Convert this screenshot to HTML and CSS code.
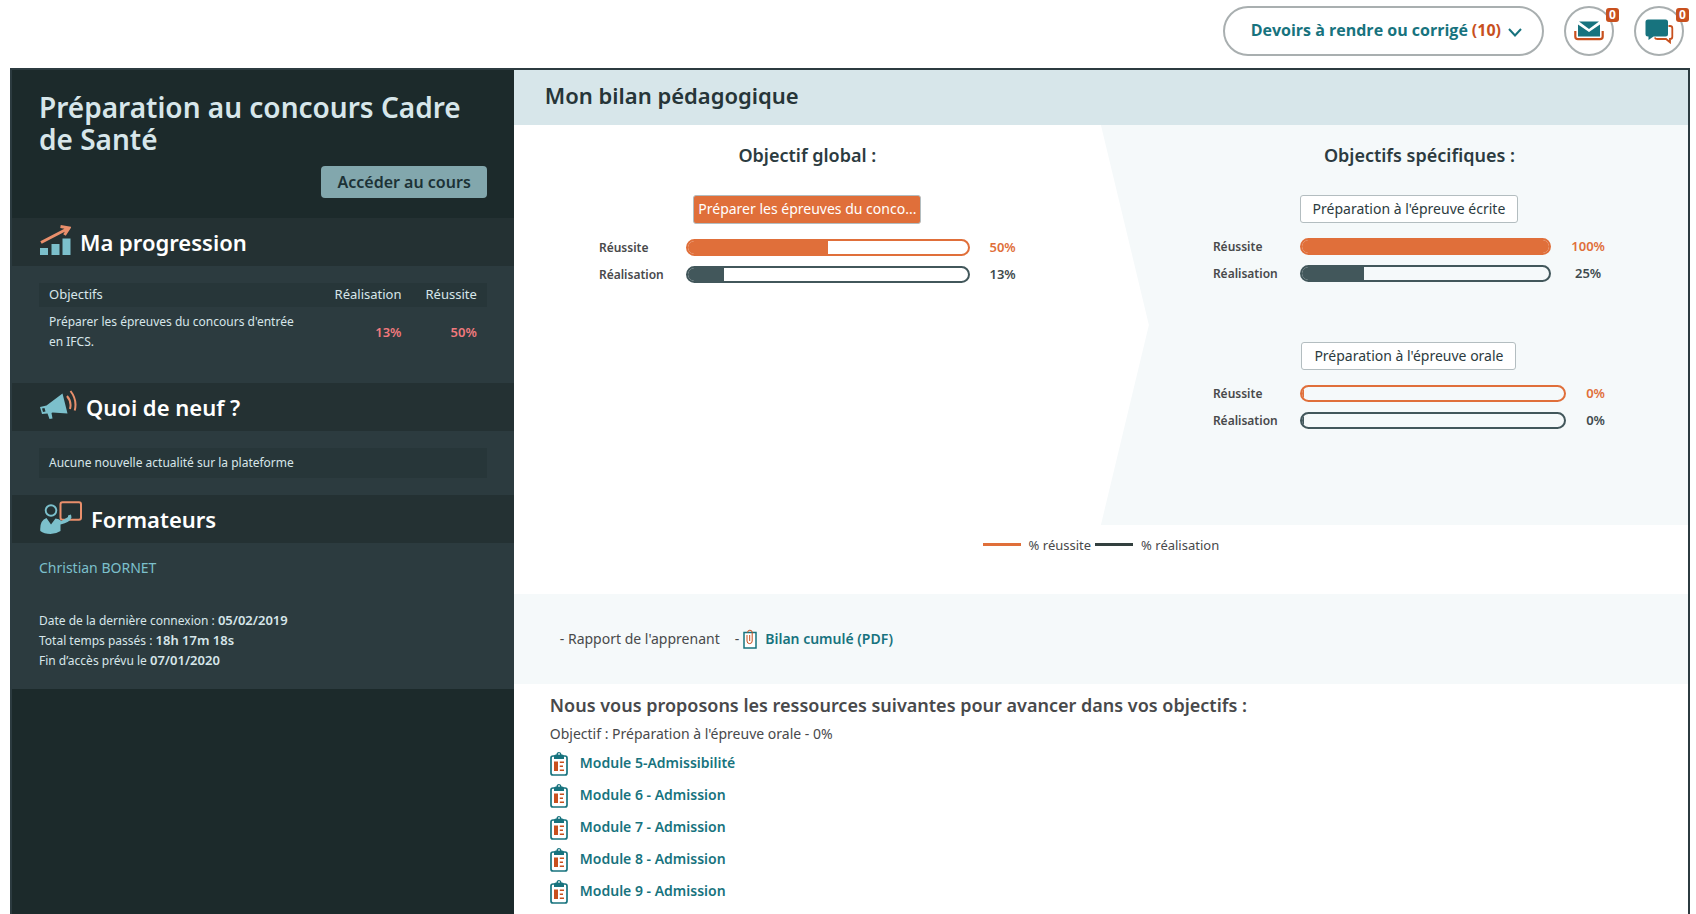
FILE: index.html
```html
<!DOCTYPE html>
<html lang="fr">
<head>
<meta charset="utf-8">
<meta name="viewport" content="width=device-width, initial-scale=1">
<title>Mon bilan pédagogique</title>
<link rel="stylesheet" href="styles.css">
</head>
<body>
<svg class="symbols" aria-hidden="true">
  <symbol id="clipboard" viewBox="0 0 18 25">
    <rect x="1" y="5" width="16" height="19" rx="2" fill="#fff" stroke="#17737e" stroke-width="1.7"/>
    <path d="M4 8V5.500a2 2 0 0 1 2-2h.5a2.500 2.500 0 0 1 5 0h.5a2 2 0 0 1 2 2V8z" fill="#17737e"/>
    <circle cx="9" cy="3" r="1" fill="#cfe3e6"/>
    <path d="M4 10.500h4v9.500H4zM9.800 10.500h4.200v1.500h-4.200zM9.800 14.500h3.200v1.500h-3.200zM9.800 18.500h4.200v1.500h-4.200z" fill="#c8501e"/>
  </symbol>
</svg>

<header class="topbar">
  <button type="button" class="pill">Devoirs à rendre ou corrigé <span class="pill-count">(10)</span>
    <svg class="chevron" viewBox="0 0 14 9" aria-hidden="true"><path d="M1 1l6 6.500L13 1" fill="none" stroke="#17737e" stroke-width="2"/></svg>
  </button>
  <button type="button" class="round" aria-label="Messagerie">
    <svg width="30" height="20" viewBox="0 0 30 20" aria-hidden="true">
      <path d="M1.300 10v5.500q0 2.700 2.700 2.700h22q2.700 0 2.700-2.700V10" fill="none" stroke="#c8501e" stroke-width="2.200"/>
      <path d="M4 3.500V15.500H26V3.500L15 11z" fill="#17737e"/><path d="M5 .5H25L15 8z" fill="#17737e"/>
    </svg>
    <span class="badge">0</span>
  </button>
  <button type="button" class="round" aria-label="Discussions">
    <svg width="29" height="25" viewBox="0 0 29 25" aria-hidden="true">
      <path d="M23.500 7h1.500q2.300 0 2.300 2.300v8.400q0 2.300-2.300 2.300v3.300L21 20H12.500q-2.200 0-2.700-1.600" fill="none" stroke="#c8501e" stroke-width="1.800"/>
      <path d="M3 .5h17.500q2.500 0 2.500 2.500v12q0 2.500-2.500 2.500H8.500L3.500 21v-3.500H3Q.5 17.500.5 15V3Q.5.5 3 .5z" fill="#17737e"/>
    </svg>
    <span class="badge">0</span>
  </button>
</header>

<div class="frame">
  <aside class="sidebar">
    <div class="course">
      <h1>Préparation au concours Cadre de Santé</h1>
      <button type="button" class="enter">Accéder au cours</button>
    </div>

    <h2 class="side-head">
      <svg width="31" height="30" viewBox="0 0 31 30" aria-hidden="true">
        <path d="M0 23h8v7H0zM11.500 19h8v11h-8zM22.500 13.500h8V30h-8z" fill="#7cc0cc"/>
        <path d="M1 17.500L27 4M20.500 1.500L29 3l-4.500 7" fill="none" stroke="#e98f6c" stroke-width="3"/>
      </svg>
      Ma progression
    </h2>
    <div class="panel panel-progress">
      <table class="goals">
        <thead><tr><th>Objectifs</th><th>Réalisation</th><th>Réussite</th></tr></thead>
        <tbody><tr><td>Préparer les épreuves du concours d'entrée en IFCS.</td><td class="rate">13%</td><td class="rate">50%</td></tr></tbody>
      </table>
    </div>

    <h2 class="side-head">
      <svg width="37" height="30" viewBox="0 0 37 30" aria-hidden="true">
        <path d="M22.500 3.500L27.500 23.500 12.500 22.500 11.500 23 12.500 28.500 9.500 29 7.500 23.500 2 24 0 17 6.500 15.500z" fill="#7cc0cc"/>
        <path d="M2 18.500l2.500-.6 1 3.500-2.500.6z" fill="#243133"/>
        <path d="M27 6q5 6 3 13M30.500 1q7 9 4.200 19.500" fill="none" stroke="#e98f6c" stroke-width="2"/>
      </svg>
      Quoi de neuf ?
    </h2>
    <div class="panel">
      <p class="news">Aucune nouvelle actualité sur la plateforme</p>
    </div>

    <h2 class="side-head">
      <svg width="42" height="33" viewBox="0 0 42 33" aria-hidden="true">
        <rect x="20.500" y="1.200" width="20.500" height="17.500" rx="2" fill="none" stroke="#e98f6c" stroke-width="2"/>
        <circle cx="11" cy="9.500" r="5.300" fill="none" stroke="#7cc0cc" stroke-width="1.900"/>
        <path d="M6.500 17L11 23.500 15.500 17.500Q19 17.500 21.500 20L28 16 28 14.500 31 13.500 31.500 16.500Q30 21.500 20.500 23.500L20.500 30Q16 33 10.500 33 4 33 .3 30 -.5 19.500 6.500 17z" fill="#7cc0cc"/>
      </svg>
      Formateurs
    </h2>
    <div class="panel panel-trainers">
      <a class="trainer" href="#">Christian BORNET</a>
      <ul class="facts">
        <li>Date de la dernière connexion : <b>05/02/2019</b></li>
        <li>Total temps passés : <b>18h 17m 18s</b></li>
        <li>Fin d’accès prévu le <b>07/01/2020</b></li>
      </ul>
    </div>
  </aside>

  <main class="main">
    <h2 class="main-title">Mon bilan pédagogique</h2>

    <div class="goals-area">
      <section class="global">
        <h3>Objectif global :</h3>
        <div class="goal goal-wide">
          <div class="tag tag-active">Préparer les épreuves du conco...</div>
          <div class="bars">
            <span>Réussite</span><div class="bar orange"><i style="width:50%"></i></div><b class="orange-text">50%</b>
            <span>Réalisation</span><div class="bar"><i style="width:13%"></i></div><b>13%</b>
          </div>
        </div>
      </section>
      <section class="specific">
        <h3>Objectifs spécifiques :</h3>
        <div class="goal">
          <div class="tag">Préparation à l'épreuve écrite</div>
          <div class="bars">
            <span>Réussite</span><div class="bar orange"><i style="width:100%"></i></div><b class="orange-text">100%</b>
            <span>Réalisation</span><div class="bar"><i style="width:25%"></i></div><b>25%</b>
          </div>
        </div>
        <div class="goal">
          <div class="tag">Préparation à l'épreuve orale</div>
          <div class="bars">
            <span>Réussite</span><div class="bar orange"><i style="width:0%"></i></div><b class="orange-text">0%</b>
            <span>Réalisation</span><div class="bar"><i style="width:0%"></i></div><b>0%</b>
          </div>
        </div>
      </section>
    </div>

    <div class="legend">
      <span class="key key-orange"></span>% réussite
      <span class="key"></span>% réalisation
    </div>

    <div class="report">
      <span>- Rapport de l'apprenant</span>
      <span class="report-file">-
        <svg width="14" height="20" viewBox="0 0 14 20" aria-hidden="true">
          <rect x="1" y="3.500" width="12" height="15.500" fill="#fff" stroke="#17737e" stroke-width="1.500"/>
          <path d="M4 6v6a2.600 2.600 0 0 0 5.200 0V3.500a2.300 2.300 0 0 0-4.600 0M6.700 6v6" fill="none" stroke="#c8501e" stroke-width="1"/>
        </svg>
        <a href="#">Bilan cumulé (PDF)</a>
      </span>
    </div>

    <section class="resources">
      <h3>Nous vous proposons les ressources suivantes pour avancer dans vos objectifs :</h3>
      <p>Objectif : Préparation à l'épreuve orale - 0%</p>
      <ul>
        <li><svg class="clip" aria-hidden="true"><use href="#clipboard"/></svg><a href="#">Module 5-Admissibilité</a></li>
        <li><svg class="clip" aria-hidden="true"><use href="#clipboard"/></svg><a href="#">Module 6 - Admission</a></li>
        <li><svg class="clip" aria-hidden="true"><use href="#clipboard"/></svg><a href="#">Module 7 - Admission</a></li>
        <li><svg class="clip" aria-hidden="true"><use href="#clipboard"/></svg><a href="#">Module 8 - Admission</a></li>
        <li><svg class="clip" aria-hidden="true"><use href="#clipboard"/></svg><a href="#">Module 9 - Admission</a></li>
      </ul>
    </section>
  </main>
</div>
</body>
</html>
```
FILE: styles.css
```css
* { box-sizing: border-box; }
body { margin: 0; min-height: 100vh; display: flex; flex-direction: column; background: #fff; color: #48494b; font: 14px/20px "Noto Sans", "Open Sans", sans-serif; }
h1, h2, h3, p, ul { margin: 0; padding: 0; font-weight: 600; }
p { font-weight: 400; }
ul { list-style: none; font-weight: 400; }
a { color: #17737e; font-weight: 600; text-decoration: none; }
button { font-family: inherit; cursor: pointer; }
.symbols { position: absolute; width: 0; height: 0; }

.topbar { display: flex; justify-content: flex-end; gap: 20px; padding: 6px 12px 12px; }
.pill { display: flex; align-items: center; gap: 4px; height: 50px; padding: 0 20px 2px 26px; border: 2px solid #a9afb0; border-radius: 25px; background: #fff; color: #17737e; font-family: "Open Sans", sans-serif; font-size: 16px; font-weight: 700; }
.pill-count { color: #c8501e; }
.chevron { width: 14px; height: 9px; margin: 4px 0 0 3px; }
.round { position: relative; display: grid; place-items: center; width: 50px; height: 50px; padding: 0; border: 2px solid #a9afb0; border-radius: 50%; background: #fff; }
.badge { position: absolute; top: 0; right: -7px; width: 13px; height: 14px; border-radius: 3px; background: #c8501e; color: #fff; font-size: 12px; line-height: 14px; font-weight: 700; text-align: center; }

.frame { flex: 1; display: flex; margin: 0 6px 0 10px; border: 2px solid #2c3b40; border-bottom: 0; }
.sidebar { flex: 0 0 calc(30% - 1px); background: #1c2a2b; color: #d7e6ea; }
.course { display: flex; flex-direction: column; gap: 11px; height: 148px; padding: 21px 27px 0 27px; }
.course h1 { font-size: 28px; line-height: 32px; }
.enter { align-self: flex-end; height: 32px; padding: 0 16px; border: 0; border-radius: 4px; background: #82a7ad; color: #1c3236; font-size: 16px; font-weight: 600; }
.side-head { display: flex; align-items: center; gap: 9px; height: 48px; padding: 0 28px; background: #243133; color: #fff; font-size: 22px; line-height: 30px; }
.side-head svg { margin-bottom: 4px; }
.panel { padding: 17px 27px; background: #2c3b3f; font-size: 12px; }
.panel-progress { height: 117px; }
.goals { width: 100%; border-collapse: collapse; }
.goals th { padding: 1px 10px 3px 14px; background: #273639; font-size: 13px; font-weight: 400; text-align: right; white-space: nowrap; }
.goals th:first-child { text-align: left; padding-left: 10px; }
.goals td { padding: 5px 10px; }
.goals td:first-child { padding-right: 20px; }
.goals .rate { color: #f0797d; font-size: 13px; font-weight: 600; text-align: right; }
.news { padding: 5px 10px; background: #273639; }
.panel-trainers { padding: 15px 27px 18px; }
.trainer { color: #7cc0cc; font-size: 14px; font-weight: 400; }
.facts { padding-top: 32px; }
.facts b { font-size: 13px; font-weight: 600; line-height: 16px; }

.main { flex: 1; min-width: 0; }
.main-title { padding: 10px 31px 15px; background: #d7e6ea; color: #263538; font-size: 22px; line-height: 30px; }
.goals-area { display: flex; min-height: 400px; }
.goals-area h3 { color: #2c3b40; font-size: 18px; line-height: 24px; text-align: center; }
.global, .specific { flex: 0 0 50%; padding-top: 18px; }
.specific { padding-left: 50px; background: #f5f9fa; clip-path: polygon(0 0, 100% 0, 100% 100%, 0 100%, 48px 50%); }
.goal { width: 73%; margin: 28px 0 0 62px; }
.goal + .goal { margin-top: 60px; }
.goal-wide { width: 71%; margin-left: auto; margin-right: auto; }
.tag { width: fit-content; margin: 0 auto; padding: 3px 12px; border: 1px solid #b3bdc0; border-radius: 3px; background: #fff; color: #2c3b40; line-height: 20px; white-space: nowrap; }
.tag-active { padding: 3px 4px 4px; background: #e06f3a; color: #fff; }
.bars { display: grid; grid-template-columns: 67px 1fr auto; gap: 10px 20px; align-items: center; padding-top: 15px; font-size: 12px; line-height: 17px; font-weight: 600; }
.bars b { font-size: 13px; font-weight: 600; text-align: center; color: #3f4b4e; }
.bars .orange-text { color: #e06f3a; }
.bar { height: 17px; border: 2px solid #42575b; border-radius: 9px; overflow: hidden; }
.bar i { display: block; min-width: 2px; height: 100%; background: #42575b; }
.bar.orange { border-color: #e06f3a; }
.bar.orange i { background: #e06f3a; }
.legend { display: flex; align-items: center; justify-content: center; height: 69px; padding: 0 4px 30px 0; font-size: 13px; }
.key { width: 38px; height: 3px; margin: 0 8px 0 4px; background: #33403f; }
.key-orange { background: #e06f3a; }
.report { display: flex; align-items: center; gap: 15px; min-height: 90px; padding: 0 46px; background: #f5f9fa; }
.report-file { display: flex; align-items: center; gap: 4px; }
.report a { padding-left: 4px; }
.resources { padding: 7px 36px 0; }
.resources h3 { font-size: 18px; line-height: 28px; }
.resources p { line-height: 30px; }
.resources li { display: flex; align-items: center; gap: 12px; min-height: 32px; padding-bottom: 4px; }
.clip { width: 18px; height: 25px; }
```
